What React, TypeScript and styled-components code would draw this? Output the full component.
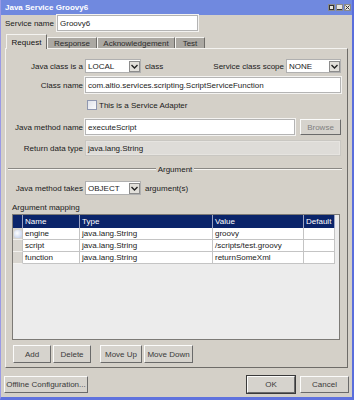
import React from 'react';
import styled, {createGlobalStyle} from 'styled-components';

const GlobalStyle = createGlobalStyle`
  html, body {
    margin: 0;
    padding: 0;
    background: #ffffff;
  }
  body {
    font-family: "Liberation Sans", Arial, sans-serif;
    font-size: 8px;
    color: #1a1a1a;
  }
  * {
    box-sizing: border-box;
  }
`;

const Window = styled.div`
  width: 354px;
  height: 400px;
  background: #d4d0c8;
  border-left: 1px solid #9a9ae6;
  border-right: 2px solid #5a6edc;
  border-bottom: 3px solid #5f72de;
  display: flex;
  flex-direction: column;
`;

const TitleBar = styled.div`
  height: 15px;
  flex: none;
  background: #7089df;
  color: #ffffff;
  font-weight: bold;
  display: flex;
  align-items: center;
  justify-content: space-between;
  padding: 0 1px 0 4px;
`;

const TitleButtons = styled.div`
  display: flex;
  gap: 1px;
  align-self: flex-start;
  margin-top: 4px;
`;

const TitleButton = styled.span`
  width: 7px;
  height: 7px;
  background: #e6e4df;
  border: 1px solid #8a8a8a;
  display: flex;
  align-items: center;
  justify-content: center;
`;

const Body = styled.div`
  flex: 1;
  display: flex;
  flex-direction: column;
  padding: 0 3px 0 3px;
`;

const TopRow = styled.div`
  height: 16px;
  display: flex;
  align-items: center;
  gap: 4px;
  padding-left: 1px;
  white-space: nowrap;
`;

const TopLabel = styled.span`
  width: 48px;
  flex: none;
  white-space: nowrap;
`;

const TextField = styled.div<{$w?: number; $disabled?: boolean}>`
  height: 16px;
  ${p => (p.$w ? `width: ${p.$w}px; flex: none;` : 'flex: 1;')}
  background: ${p => (p.$disabled ? '#dedcd8' : '#ffffff')};
  border: 1px solid ${p => (p.$disabled ? '#c9c7c2' : '#b4b4b4')};
  box-shadow: ${p => (p.$disabled ? 'inset 0 0 0 1px #e6e4e0' : '0 0 0 1px #f4f3f1')};
  display: flex;
  align-items: center;
  padding-left: 2px;
  white-space: nowrap;
  overflow: hidden;
`;

const TabStrip = styled.div`
  margin-top: 3px;
  height: 14px;
  display: flex;
  align-items: flex-end;
  padding-left: 2px;
`;

const Tab = styled.div<{$active?: boolean; $w: number}>`
  width: ${p => p.$w}px;
  height: ${p => (p.$active ? 15 : 11)}px;
  background: ${p => (p.$active ? '#d4d0c8' : '#aba8a2')};
  border-top: 1px solid #f4f3f0;
  border-left: 1px solid #f4f3f0;
  border-right: 1px solid #6e6c68;
  color: ${p => (p.$active ? '#111' : '#2c2c2c')};
  display: flex;
  align-items: center;
  justify-content: center;
  padding-top: 1px;
  position: relative;
  z-index: ${p => (p.$active ? 1 : 0)};
  margin-bottom: ${p => (p.$active ? -1 : 0)}px;
`;

const Panel = styled.div`
  margin-left: 1px;
  width: 343px;
  height: 320px;
  border-top: 1px solid #f4f3f0;
  border-left: 1px solid #f4f3f0;
  border-right: 1px solid #6e6c68;
  border-bottom: 1px solid #6e6c68;
  padding: 10px 6px 0 0;
  display: flex;
  flex-direction: column;
`;

const FormRow = styled.div<{$h: number; $mt: number}>`
  height: ${p => p.$h}px;
  margin-top: ${p => p.$mt}px;
  display: flex;
  align-items: center;
  flex: none;
  white-space: nowrap;
`;

const Label = styled.span`
  width: 77px;
  text-align: right;
  margin-right: 2px;
  flex: none;
  white-space: nowrap;
`;

const Trail = styled.span`
  margin-left: 4px;
`;

const RightGroup = styled.div`
  margin-left: auto;
  display: flex;
  align-items: center;
  gap: 2px;
`;

const ComboBox = styled.div<{$w: number}>`
  width: ${p => p.$w}px;
  height: 14px;
  background: #ffffff;
  border: 1px solid #b0b0b0;
  display: flex;
  align-items: center;
  justify-content: space-between;
  padding-left: 2px;
`;

const ComboArrow = styled.span`
  width: 11px;
  height: 11px;
  background: #e2e0db;
  border: 1px solid #8c8c8c;
  display: flex;
  align-items: center;
  justify-content: center;
`;

const CheckBox = styled.span`
  width: 10px;
  height: 10px;
  margin-left: 81px;
  margin-right: 2px;
  border: 1px solid #8f97b0;
  background: linear-gradient(135deg, #dfe2ea, #fbfbfc);
`;

const Button = styled.button<{$w: number; $h?: number; $default?: boolean; $muted?: boolean}>`
  width: ${p => p.$w}px;
  height: ${p => p.$h ?? 17}px;
  flex: none;
  font-family: "Liberation Sans", Arial, sans-serif;
  font-size: 8px;
  color: ${p => (p.$muted ? '#808080' : '#3a3a3a')};
  background: #d6d3cd;
  padding: 0;
  border: 1px solid;
  border-color: #fbfbfa #6a6a6a #6a6a6a #fbfbfa;
  outline: ${p => (p.$default ? '1px solid #3a3a3a' : 'none')};
  display: flex;
  align-items: center;
  justify-content: center;
  white-space: nowrap;
`;

const Separator = styled.div`
  height: 12px;
  margin-top: 7px;
  margin-left: 2px;
  margin-right: -1px;
  display: flex;
  align-items: center;
  gap: 2px;
`;

const Etch = styled.span`
  flex: 1;
  height: 2px;
  border-top: 1px solid #8a8884;
  border-bottom: 1px solid #f6f5f2;
`;

const SectionLabel = styled.div`
  margin-top: 7px;
  margin-left: 6px;
  height: 11px;
  display: flex;
  align-items: center;
`;

const TableBox = styled.div`
  margin-top: 1px;
  margin-left: 6px;
  width: 328px;
  height: 126px;
  border: 1px solid #7c7a76;
  background: #ececec;
  flex: none;
`;

const Grid = styled.div`
  display: grid;
  grid-template-columns: 10px 57px 133px 91px 31px;
  width: 322px;
  background: #ffffff;
`;

const HeadCell = styled.div`
  height: 13px;
  background: #0a246a;
  color: #ffffff;
  border-right: 1px solid #9aa3c4;
  display: flex;
  align-items: center;
  padding-left: 2px;
`;

const Cell = styled.div`
  height: 12px;
  border-right: 1px solid #c4c4c4;
  border-bottom: 1px solid #c4c4c4;
  display: flex;
  align-items: center;
  padding-left: 2px;
  white-space: nowrap;
  overflow: hidden;
`;

const RowHead = styled.div<{$selected?: boolean}>`
  height: 12px;
  background: #d8d5cf;
  border-right: 1px solid #c4c4c4;
  border-bottom: 1px solid #f2f1ee;
  display: flex;
  align-items: center;
  justify-content: center;
  &::after {
    content: '';
    display: ${p => (p.$selected ? 'block' : 'none')};
    width: 8px;
    height: 8px;
    border-radius: 3px;
    background: radial-gradient(circle at 40% 40%, #ffffff, #b8c8e8);
  }
`;

const ButtonRow = styled.div`
  margin-top: 5px;
  margin-left: 7px;
  display: flex;
  gap: 2px;
`;

const Gap = styled.span<{$w: number}>`
  width: ${p => p.$w}px;
  flex: none;
`;

const BottomBar = styled.div`
  margin-top: 8px;
  display: flex;
  align-items: center;
  gap: 5px;
`;

const Spacer = styled.span`
  flex: 1;
`;

const Chevron = () => (
  <svg width="7" height="5" viewBox="0 0 7 5">
    <path d="M0.5 1 L3.5 4 L6.5 1" fill="none" stroke="#222" strokeWidth="1.4" />
  </svg>
);

const rows = [
  {name: 'engine', type: 'java.lang.String', value: 'groovy'},
  {name: 'script', type: 'java.lang.String', value: '/scripts/test.groovy'},
  {name: 'function', type: 'java.lang.String', value: 'returnSomeXml'},
];

export default function App(): JSX.Element {
  return (
    <>
      <GlobalStyle />
      <Window>
        <TitleBar>
          <span>Java Service Groovy6</span>
          <TitleButtons>
            <TitleButton>
              <svg width="5" height="5" viewBox="0 0 5 5">
                <rect x="0.5" y="0.5" width="4" height="4" fill="none" stroke="#333" strokeWidth="1" />
              </svg>
            </TitleButton>
            <TitleButton>
              <svg width="5" height="5" viewBox="0 0 5 5">
                <path d="M0 4.5 H5" stroke="#333" strokeWidth="1" />
              </svg>
            </TitleButton>
            <TitleButton>
              <svg width="5" height="5" viewBox="0 0 5 5">
                <path d="M0.5 0.5 L4.5 4.5 M4.5 0.5 L0.5 4.5" stroke="#333" strokeWidth="1" />
              </svg>
            </TitleButton>
          </TitleButtons>
        </TitleBar>
        <Body>
          <TopRow>
            <TopLabel>Service name</TopLabel>
            <TextField $w={141}>Groovy6</TextField>
          </TopRow>
          <TabStrip>
            <Tab $active $w={41}>Request</Tab>
            <Tab $w={50}>Response</Tab>
            <Tab $w={78}>Acknowledgement</Tab>
            <Tab $w={30}>Test</Tab>
          </TabStrip>
          <Panel>
            <FormRow $h={14} $mt={0}>
              <Label>Java class is a</Label>
              <ComboBox $w={56}>
                LOCAL
                <ComboArrow>
                  <Chevron />
                </ComboArrow>
              </ComboBox>
              <Trail>class</Trail>
              <RightGroup>
                <span>Service class scope</span>
                <ComboBox $w={55}>
                  NONE
                  <ComboArrow>
                    <Chevron />
                  </ComboArrow>
                </ComboBox>
              </RightGroup>
            </FormRow>
            <FormRow $h={16} $mt={4}>
              <Label>Class name</Label>
              <TextField>com.altio.services.scripting.ScriptServiceFunction</TextField>
            </FormRow>
            <FormRow $h={12} $mt={6}>
              <CheckBox />
              <span>This is a Service Adapter</span>
            </FormRow>
            <FormRow $h={16} $mt={8}>
              <Label>Java method name</Label>
              <TextField>executeScript</TextField>
              <Gap $w={5} />
              <Button $w={41} $h={16} $muted>
                Browse
              </Button>
            </FormRow>
            <FormRow $h={16} $mt={5}>
              <Label>Return data type</Label>
              <TextField $disabled>java.lang.String</TextField>
            </FormRow>
            <Separator>
              <Etch />
              <span>Argument</span>
              <Etch />
            </Separator>
            <FormRow $h={14} $mt={6}>
              <Label>Java method takes</Label>
              <ComboBox $w={56}>
                OBJECT
                <ComboArrow>
                  <Chevron />
                </ComboArrow>
              </ComboBox>
              <Trail>argument(s)</Trail>
            </FormRow>
            <SectionLabel>Argument mapping</SectionLabel>
            <TableBox>
              <Grid>
                <HeadCell />
                <HeadCell>Name</HeadCell>
                <HeadCell>Type</HeadCell>
                <HeadCell>Value</HeadCell>
                <HeadCell>Default</HeadCell>
                {rows.map((r, i) => (
                  <React.Fragment key={r.name}>
                    <RowHead $selected={i === 0} />
                    <Cell>{r.name}</Cell>
                    <Cell>{r.type}</Cell>
                    <Cell>{r.value}</Cell>
                    <Cell />
                  </React.Fragment>
                ))}
              </Grid>
            </TableBox>
            <ButtonRow>
              <Button $w={38} $h={18}>Add</Button>
              <Button $w={38} $h={18}>Delete</Button>
              <Gap $w={5} />
              <Button $w={42} $h={18}>Move Up</Button>
              <Button $w={49} $h={18}>Move Down</Button>
            </ButtonRow>
          </Panel>
          <BottomBar>
            <Button $w={84}>Offline Configuration...</Button>
            <Spacer />
            <Button $w={48} $default>OK</Button>
            <Button $w={49}>Cancel</Button>
          </BottomBar>
        </Body>
      </Window>
    </>
  );
}
